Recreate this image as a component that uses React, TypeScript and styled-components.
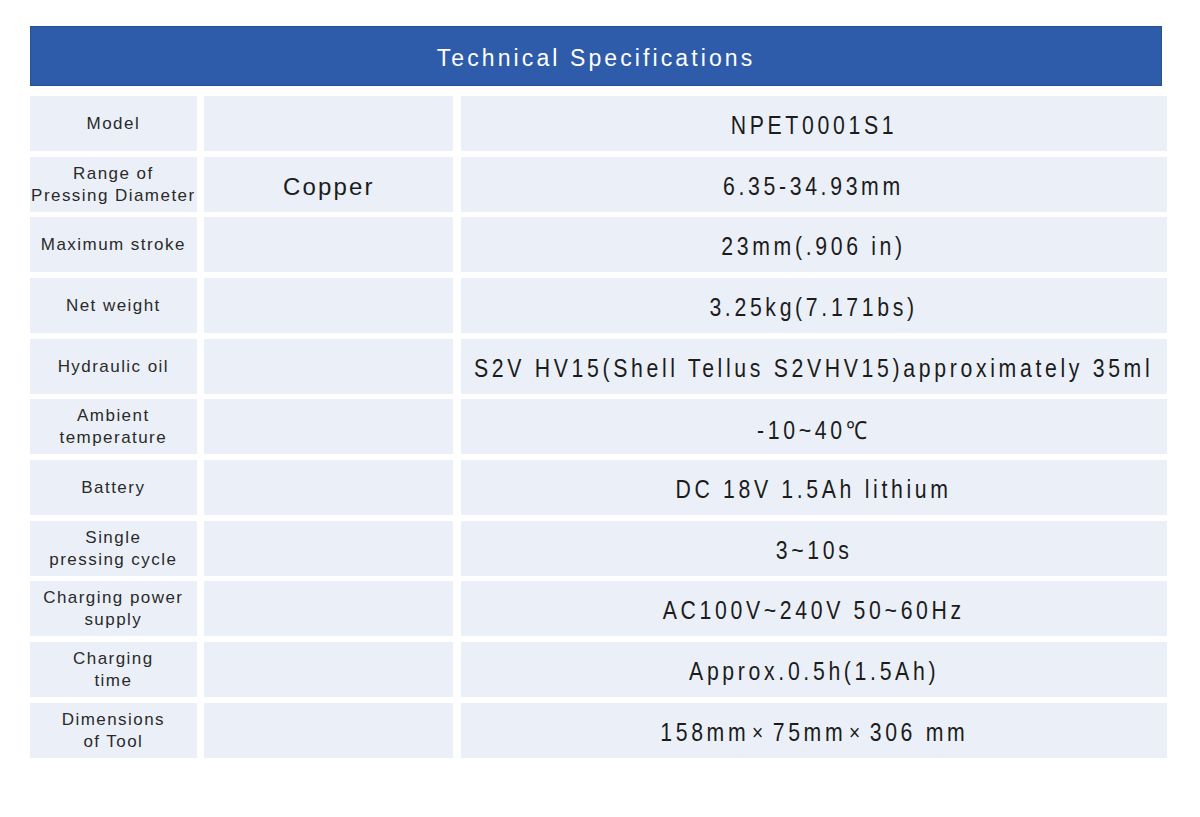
import React from "react";
import styled, { createGlobalStyle } from "styled-components";

const GlobalStyle = createGlobalStyle`
  html, body { margin: 0; padding: 0; background: #ffffff; }
  body { font-family: "Liberation Sans", Arial, sans-serif; }
`;

const Page = styled.div`
  width: 1200px;
  height: 817px;
  box-sizing: border-box;
  padding: 26px 0 0 30px;
  background: #ffffff;
`;

const Header = styled.div`
  width: 1132px;
  height: 60px;
  box-sizing: border-box;
  background: #2e5caa;
  border: 1px solid #27508f;
  display: flex;
  align-items: center;
  justify-content: center;
  color: #ffffff;
  font-family: "Liberation Sans", Arial, sans-serif;
  font-size: 23px;
  letter-spacing: 3.1px;
  padding-top: 4px;
`;

const Table = styled.div`
  margin-top: 10px;
  display: grid;
  grid-template-columns: 166.7px 249.3px 705.7px;
  grid-auto-rows: 55px;
  column-gap: 7.5px;
  row-gap: 5.67px;
`;

const Cell = styled.div`
  background: #ebf0f8;
  display: flex;
  align-items: center;
  justify-content: center;
  text-align: center;
  color: #2a2a2a;
`;

const Label = styled(Cell)`
  font-family: "Liberation Sans", Arial, sans-serif;
  font-size: 17px;
  letter-spacing: 1.45px;
  line-height: 22px;
  padding-top: 1px;
`;

const Material = styled(Cell)`
  font-family: "Liberation Sans", Arial, sans-serif;
  font-size: 24px;
  letter-spacing: 2.2px;
  color: #1c1c1c;
  padding-top: 6px;
`;

const Value = styled(Cell)`
  font-family: "Liberation Sans", Arial, sans-serif;
  font-size: 25px;
  color: #1c1c1c;
  white-space: nowrap;
  padding-top: 4px;
`;

const Condensed = styled.span`
  display: inline-block;
  letter-spacing: 4.3px;
  transform: scaleX(0.85);
  transform-origin: center;
`;

const Times = styled.span`
  font-size: 0.9em;
  margin: 0 7px 0 3px;
  vertical-align: 1px;
`;

type Row = { label: React.ReactNode; material?: string; value: React.ReactNode };

const rows: Row[] = [
  { label: "Model", value: "NPET0001S1" },
  {
    label: (
      <>
        Range of
        <br />
        Pressing Diameter
      </>
    ),
    material: "Copper",
    value: "6.35-34.93mm",
  },
  { label: "Maximum stroke", value: "23mm(.906 in)" },
  { label: "Net weight", value: "3.25kg(7.171bs)" },
  { label: "Hydraulic oil", value: "S2V HV15(Shell Tellus S2VHV15)approximately 35ml" },
  {
    label: (
      <>
        Ambient
        <br />
        temperature
      </>
    ),
    value: "-10~40℃",
  },
  { label: "Battery", value: "DC 18V 1.5Ah lithium" },
  {
    label: (
      <>
        Single
        <br />
        pressing cycle
      </>
    ),
    value: "3~10s",
  },
  {
    label: (
      <>
        Charging power
        <br />
        supply
      </>
    ),
    value: "AC100V~240V 50~60Hz",
  },
  {
    label: (
      <>
        Charging
        <br />
        time
      </>
    ),
    value: "Approx.0.5h(1.5Ah)",
  },
  {
    label: (
      <>
        Dimensions
        <br />
        of Tool
      </>
    ),
    value: (
      <>
        158mm<Times>×</Times>75mm<Times>×</Times>306 mm
      </>
    ),
  },
];

export default function App() {
  return (
    <>
      <GlobalStyle />
      <Page>
        <Header>Technical Specifications</Header>
        <Table>
          {rows.map((r, i) => (
            <React.Fragment key={i}>
              <Label>{r.label}</Label>
              <Material>{r.material ?? ""}</Material>
              <Value>
                <Condensed>{r.value}</Condensed>
              </Value>
            </React.Fragment>
          ))}
        </Table>
      </Page>
    </>
  );
}
